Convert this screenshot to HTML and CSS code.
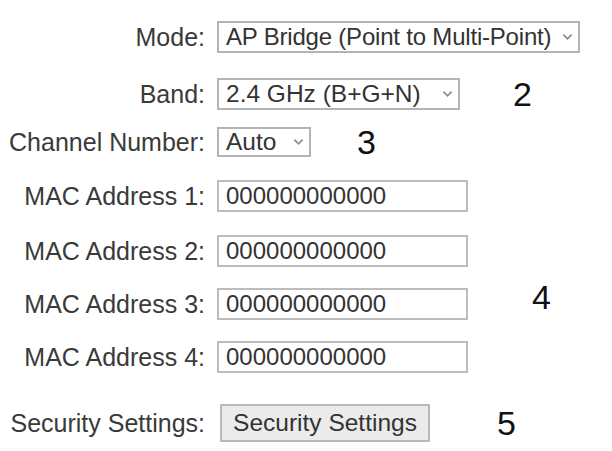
FILE: index.html
```html
<!DOCTYPE html>
<html>
<head>
<meta charset="utf-8">
<link rel="stylesheet" href="styles.css">
</head>
<body>
<div class="form">
  <div class="row r1">
    <label class="lbl">Mode:</label>
    <div class="select w-mode"><span>AP Bridge (Point to Multi-Point)</span><svg class="chev" viewBox="0 0 12 8" width="11" height="8"><path d="M1.5 1.5 L6 6 L10.5 1.5" fill="none" stroke="#8a8a8a" stroke-width="1.8"/></svg></div>
  </div>
  <div class="row r2">
    <label class="lbl">Band:</label>
    <div class="select w-band"><span>2.4 GHz (B+G+N)</span><svg class="chev" viewBox="0 0 12 8" width="11" height="8"><path d="M1.5 1.5 L6 6 L10.5 1.5" fill="none" stroke="#8a8a8a" stroke-width="1.8"/></svg></div>
    <span class="num n2">2</span>
  </div>
  <div class="row r3">
    <label class="lbl">Channel Number:</label>
    <div class="select w-chan"><span>Auto</span><svg class="chev" viewBox="0 0 12 8" width="11" height="8"><path d="M1.5 1.5 L6 6 L10.5 1.5" fill="none" stroke="#8a8a8a" stroke-width="1.8"/></svg></div>
    <span class="num n3">3</span>
  </div>
  <div class="row r4">
    <label class="lbl">MAC Address 1:</label>
    <input class="field" type="text" value="000000000000">
  </div>
  <div class="row r5">
    <label class="lbl">MAC Address 2:</label>
    <input class="field" type="text" value="000000000000">
  </div>
  <div class="row r6">
    <label class="lbl">MAC Address 3:</label>
    <input class="field" type="text" value="000000000000">
    <span class="num n4">4</span>
  </div>
  <div class="row r7">
    <label class="lbl">MAC Address 4:</label>
    <input class="field" type="text" value="000000000000">
  </div>
  <div class="row r8">
    <label class="lbl">Security Settings:</label>
    <button class="btn" type="button">Security Settings</button>
    <span class="num n5">5</span>
  </div>
</div>
</body>
</html>
```
FILE: styles.css
```css
html, body {
  margin: 0;
  padding: 0;
  background: #ffffff;
}
body {
  font-family: "Liberation Sans", Arial, sans-serif;
  color: #333;
}
.form {
  display: flex;
  flex-direction: column;
  padding-top: 21px;
}
.row {
  display: flex;
  align-items: center;
  height: 32px;
}
.r2 { margin-top: 25px; }
.r3 { margin-top: 17px; height: 30px; }
.r4 { margin-top: 23px; }
.r5 { margin-top: 23px; }
.r6 { margin-top: 21px; }
.r7 { margin-top: 21px; }
.r8 { margin-top: 31px; height: 38px; }
.lbl {
  width: 205px;
  text-align: right;
  font-size: 25px;
  color: #3a3a3a;
  flex: none;
  white-space: nowrap;
}
.select {
  margin-left: 12px;
  box-sizing: border-box;
  height: 100%;
  border: 2px solid #b4b4b4;
  display: flex;
  align-items: center;
  justify-content: space-between;
  padding: 0 5px 0 7px;
  font-size: 24.5px;
  color: #333;
  white-space: nowrap;
  flex: none;
}
.w-mode { width: 363px; font-size: 24px; letter-spacing: -0.2px; }
.w-band { width: 243px; }
.w-chan { width: 94px; }
.chev { flex: none; margin-left: 4px; }
.field {
  margin: 0 0 0 12px;
  box-sizing: border-box;
  width: 251px;
  height: 32px;
  border: 2px solid #bcbcbc;
  padding: 0 0 0 7px;
  font-family: "Liberation Sans", Arial, sans-serif;
  font-size: 24px;
  color: #333;
  background: #fff;
  outline: none;
}
.btn {
  margin-left: 15px;
  box-sizing: border-box;
  width: 210px;
  height: 38px;
  border: 2px solid #b8b8b8;
  border-radius: 1px;
  background: #ebebeb;
  font-family: "Liberation Sans", Arial, sans-serif;
  font-size: 24.5px;
  color: #333;
  padding: 0;
}
.num {
  font-size: 34px;
  color: #111;
  line-height: 1;
}
.n2 { margin-left: 53px; }
.n3 { margin-left: 46px; }
.n4 { margin-left: 64px; margin-top: -14px; }
.n5 { margin-left: 67px; }
```
